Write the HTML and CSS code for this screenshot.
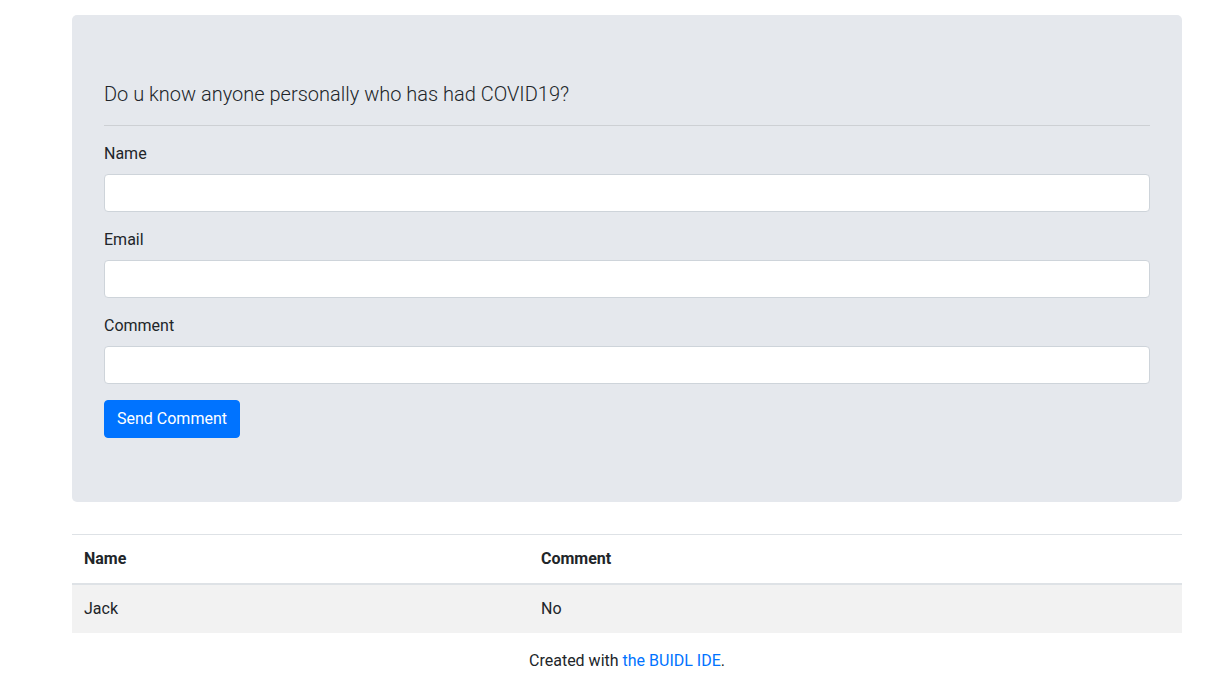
FILE: index.html
```html
<!DOCTYPE html>
<html>
<head>
<meta charset="utf-8">
<link rel="stylesheet" href="styles.css">
</head>
<body>
<div class="container">
  <div class="jumbotron">
    <p class="lead">Do u know anyone personally who has had COVID19?</p>
    <hr class="divider">
    <form class="form">
      <div class="form-group">
        <label class="label">Name</label>
        <input class="input" type="text">
      </div>
      <div class="form-group">
        <label class="label">Email</label>
        <input class="input" type="text">
      </div>
      <div class="form-group">
        <label class="label">Comment</label>
        <input class="input" type="text">
      </div>
      <button class="btn" type="button">Send Comment</button>
    </form>
  </div>
  <table class="table">
    <thead>
      <tr><th class="col-name">Name</th><th>Comment</th></tr>
    </thead>
    <tbody>
      <tr class="stripe"><td>Jack</td><td>No</td></tr>
    </tbody>
  </table>
  <p class="footer">Created with <a class="link" href="#">the BUIDL IDE</a>.</p>
</div>
</body>
</html>
```
FILE: styles.css
```css
html, body {
  margin: 0;
  padding: 0;
  background: #fff;
}
body {
  font-family: Roboto, "Noto Sans", "Liberation Sans", sans-serif;
  font-size: 16px;
  line-height: 1.5;
  color: #212529;
}
.container {
  width: 1110px;
  margin-left: 72px;
  padding-top: 15px;
}
.jumbotron {
  background: #e5e8ed;
  border-radius: 5px;
  padding: 64px 32px;
  margin-bottom: 32px;
}
.lead {
  font-size: 20px;
  font-weight: 300;
  line-height: 30px;
  margin: 0 0 16px 0;
}
.divider {
  border: 0;
  border-top: 1px solid rgba(0,0,0,0.1);
  margin: 0 0 16px 0;
  height: 0;
}
.form { margin: 0; }
.form-group {
  margin-bottom: 16px;
  display: flex;
  flex-direction: column;
}
.label {
  display: block;
  margin-bottom: 8px;
  line-height: 24px;
}
.input {
  display: block;
  box-sizing: border-box;
  width: 100%;
  height: 38px;
  padding: 6px 12px;
  font: inherit;
  background: #fff;
  border: 1px solid #ced4da;
  border-radius: 4px;
  margin: 0;
}
.btn {
  display: inline-block;
  box-sizing: border-box;
  height: 38px;
  padding: 6px 12px;
  font: inherit;
  line-height: 24px;
  color: #fff;
  background: #0073ff;
  border: 1px solid #0073ff;
  border-radius: 4px;
}
.table {
  width: 100%;
  border-collapse: collapse;
  margin-bottom: 16px;
}
.table th, .table td {
  padding: 12px;
  text-align: left;
  vertical-align: top;
  border-top: 1px solid #dee2e6;
  line-height: 24px;
}
.table th {
  font-weight: 700;
  border-bottom: 2px solid #dee2e6;
}
.col-name { width: 433px; }
.stripe { background: #f2f2f2; }
.table tbody td { border-top: 0; }
.footer {
  text-align: center;
  margin: 0;
  line-height: 24px;
}
.link {
  color: #0073ff;
  text-decoration: none;
}
```
